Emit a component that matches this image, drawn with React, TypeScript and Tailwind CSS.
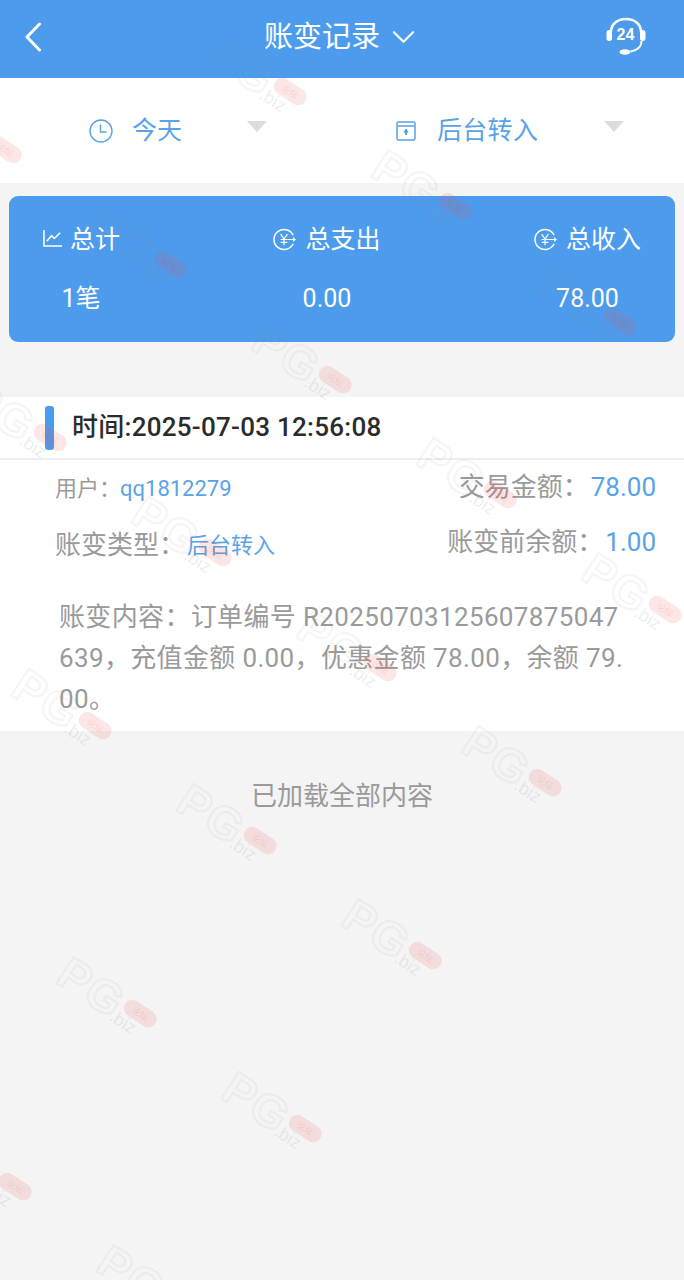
import * as React from "react";

const FONT = "font-['Roboto','Noto_Sans_CJK_SC',sans-serif]";

// red pill centres of the repeating watermark
const MARKS: [number, number][] = [
  [125, -23], [290, 92], [455, 207], [620, 322], [5, 150], [170, 265], [335, 380], [500, 495], [665, 610],
  [50, 438], [215, 553], [380, 668], [545, 783], [95, 726], [260, 841], [425, 956],
  [140, 1014], [305, 1129], [15, 1187], [180, 1302],
];

function Watermark({ x, y }: { x: number; y: number }) {
  return (
    <div className="absolute w-0 h-0" style={{ left: x, top: y }}>
      <div className="absolute left-[-82px] top-[-20px] w-[110px] h-[40px] rotate-[33deg] origin-[82px_20px]">
        <span className="absolute left-[-8px] top-[-2px] font-['Liberation_Sans',sans-serif] text-[46px] leading-[52px] tracking-[2px] font-bold text-transparent [-webkit-text-stroke:2.5px_rgba(150,150,160,0.09)]">
          PG
        </span>
        <span className="absolute left-[64px] top-[11px] w-[36px] h-[17px] rounded-full bg-[rgba(240,90,90,0.15)] text-center font-['Noto_Sans_CJK_SC',sans-serif] text-[9px] leading-[17px] text-[rgba(200,60,60,0.14)]">
          论坛
        </span>
        <span className="absolute left-[58px] top-[26px] font-['Liberation_Sans',sans-serif] text-[18px] leading-[20px] text-[rgba(150,150,160,0.18)]">
          .biz
        </span>
      </div>
    </div>
  );
}

function Headset() {
  return (
    <span className="relative block w-[42px] h-[40px]">
      <svg viewBox="0 0 42 40" className="absolute inset-0 w-[42px] h-[40px]" fill="none" stroke="#fff">
        <path d="M6 15C6 7 12.500 2 21 2s15 5 15 13" strokeWidth="2.500" />
        <rect x="1.500" y="13" width="5.500" height="11" rx="2.700" fill="#fff" stroke="none" />
        <rect x="35" y="13" width="5.500" height="11" rx="2.700" fill="#fff" stroke="none" />
        <path d="M36.500 24c0 6-5 9.500-11 10.500" strokeWidth="2" />
        <ellipse cx="20" cy="35" rx="5.500" ry="2.800" fill="#fff" stroke="none" />
      </svg>
      <span className="absolute left-[-1px] right-0 top-[8px] text-center font-['Liberation_Sans',sans-serif] text-[16px] leading-[20px] font-bold text-white">
        24
      </span>
    </span>
  );
}

function YenArrow() {
  return (
    <svg viewBox="0 0 24 24" className="w-[23px] h-[23px] mt-[-2px]" fill="none" stroke="#fff" strokeWidth="1.500">
      <path d="M21 7.500A10.500 10.500 0 1 0 21 16.500" />
      <path d="M8 6.500l3.500 5 3.500-5M11.500 11.500V18M8 12h7M8 15h7" strokeWidth="1.300" />
      <path d="M15 12h8M21 10l2 2-2 2" strokeWidth="1.200" />
    </svg>
  );
}

function Triangle() {
  return <span className="block w-0 h-0 border-x-[10px] border-x-transparent border-t-[11px] border-t-[#dcdcdc] mt-[-9px]" />;
}

function Stat({ icon, label, value }: { icon: React.ReactNode; label: string; value: string }) {
  return (
    <div className="flex flex-col items-center">
      <div className="flex items-center gap-[9px] h-[36px] text-[25px]">
        {icon}
        <span>{label}</span>
      </div>
      <div className="mt-[23px] text-[25px] leading-[36px]">{value}</div>
    </div>
  );
}

export default function App() {
  return (
    <div className={`${FONT} relative min-h-[1280px] overflow-hidden bg-[#f4f4f4]`}>
      <header className="flex items-center justify-between h-[78px] pl-[24px] pr-[37px] pb-[4px] bg-[#4c9bec] text-white">
        <svg viewBox="0 0 20 30" className="w-[20px] h-[30px]" fill="none" stroke="#fff" strokeWidth="3" strokeLinecap="round" strokeLinejoin="round">
          <path d="M15.500 2 3 15l12.500 13" />
        </svg>
        <div className="flex items-center gap-[12px] ml-[30px] text-[29px] leading-[40px]">
          <span>账变记录</span>
          <svg viewBox="0 0 24 14" className="w-[23px] h-[14px]" fill="none" stroke="#fff" strokeWidth="2.200" strokeLinecap="round" strokeLinejoin="round">
            <path d="M2 2l10 10L22 2" />
          </svg>
        </div>
        <Headset />
      </header>

      <div className="grid grid-cols-2 h-[105px] bg-white text-[#5aa2e8] text-[25px]">
        <div className="flex items-center pl-[89px]">
          <svg viewBox="0 0 24 24" className="w-[24px] h-[24px]" fill="none" stroke="#5aa2e8" strokeWidth="1.400" strokeLinecap="round">
            <circle cx="12" cy="12" r="11" />
            <path d="M11.500 6v7H17" />
          </svg>
          <span className="ml-[19px] w-[115px]">今天</span>
          <Triangle />
        </div>
        <div className="flex items-center pl-[54px]">
          <svg viewBox="0 0 20 20" className="w-[20px] h-[20px]" fill="none" stroke="#5aa2e8" strokeWidth="1.500">
            <rect x="1" y="1" width="18" height="18" rx="1.500" />
            <path d="M1 5h18" />
            <path d="M10 8v6M7.800 10.500h4.400" strokeWidth="2" />
          </svg>
          <span className="ml-[21px] w-[167px] tracking-[0.3px]">后台转入</span>
          <Triangle />
        </div>
      </div>

      <section className="flex justify-between h-[146px] mt-[13px] mx-[9px] pt-[26px] pl-[33px] pr-[34px] rounded-[9px] bg-[#4c9bec] text-white">
        <Stat
          label="总计"
          value="1笔"
          icon={
            <svg viewBox="0 0 22 20" className="w-[21px] h-[19px] mr-[-2px] mt-[-4px]" fill="none" stroke="#fff" strokeWidth="1.600">
              <path d="M2 1v17h19" />
              <path d="M5 13l5-6 3 3 6-6" />
            </svg>
          }
        />
        <Stat label="总支出" value="0.00" icon={<YenArrow />} />
        <Stat label="总收入" value="78.00" icon={<YenArrow />} />
      </section>

      <section className="mt-[55px] h-[334px] bg-white">
        <div className="flex items-center h-[63px] pl-[45px] border-b-2 border-[#eeeeee]">
          <span className="block w-[9px] h-[44px] rounded-[3px] bg-[#4c9bec]" />
          <span className="ml-[18px] text-[26px] tracking-[0.27px] font-medium text-[#2b2b2b]">时间:2025-07-03 12:56:08</span>
        </div>
        <div className="flex justify-between pl-[55px] pr-[28px] pt-[4px] h-[52px] text-[#9a9a9a]">
          <div className="flex items-center text-[22px]">
            用户：<span className="text-[#5aa2e8] ml-[-1px]">qq1812279</span>
          </div>
          <div className="flex items-center text-[26px] mt-[-2px]">
            交易金额：<span className="text-[#5aa2e8] ml-[2px]">78.00</span>
          </div>
        </div>
        <div className="flex justify-between pl-[55px] pr-[28px] h-[56px] pt-[10px] text-[#9a9a9a] text-[26px]">
          <div className="flex items-center">
            账变类型：<span className="text-[#5aa2e8] text-[22px] ml-[2px]">后台转入</span>
          </div>
          <div className="flex items-center mt-[-6px]">
            账变前余额：<span className="text-[#5aa2e8] ml-[2px]">1.00</span>
          </div>
        </div>
        <p className="w-[566px] ml-[59px] mt-[29px] text-[26px] tracking-[0.35px] leading-[41px] text-[#9a9a9a] break-all">
          账变内容：订单编号 R20250703125607875047639，充值金额 0.00，优惠金额 78.00，余额 79.00。
        </p>
      </section>

      <p className="mt-[45px] text-center text-[26px] leading-[40px] text-[#9a9a9a]">已加载全部内容</p>

      <div className="absolute inset-0 pointer-events-none">
        {MARKS.map(([x, y]) => (
          <Watermark key={`${x}-${y}`} x={x} y={y} />
        ))}
      </div>
    </div>
  );
}
